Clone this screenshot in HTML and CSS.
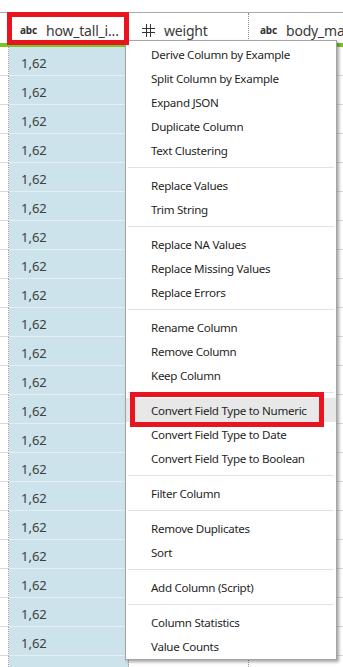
FILE: index.html
```html
<!DOCTYPE html>
<html>
<head>
<meta charset="utf-8">
<link rel="stylesheet" href="styles.css">
</head>
<body>
<div class="topbar"></div>
<div class="header">
  <div class="hcell c0"></div>
  <div class="hcell c1"><span class="type">abc</span><span class="name">how_tall_i...</span></div>
  <div class="hcell c2"><svg class="hash" width="13" height="13" viewBox="0 0 13 13"><path d="M4.5 0V13M8.5 0V13M0 4.5H13M0 8.5H13" stroke="#333" stroke-width="1" fill="none"/></svg><span class="name">weight</span></div>
  <div class="hcell c3"><span class="type">abc</span><span class="name">body_ma</span></div>
</div>
<div class="rows">
  <div class="row"><div class="cell c0"></div><div class="cell c1">1,62</div><div class="cell c2"></div><div class="cell c3"></div></div>
  <div class="row"><div class="cell c0"></div><div class="cell c1">1,62</div><div class="cell c2"></div><div class="cell c3"></div></div>
  <div class="row"><div class="cell c0"></div><div class="cell c1">1,62</div><div class="cell c2"></div><div class="cell c3"></div></div>
  <div class="row"><div class="cell c0"></div><div class="cell c1">1,62</div><div class="cell c2"></div><div class="cell c3"></div></div>
  <div class="row"><div class="cell c0"></div><div class="cell c1">1,62</div><div class="cell c2"></div><div class="cell c3"></div></div>
  <div class="row"><div class="cell c0"></div><div class="cell c1">1,62</div><div class="cell c2"></div><div class="cell c3"></div></div>
  <div class="row"><div class="cell c0"></div><div class="cell c1">1,62</div><div class="cell c2"></div><div class="cell c3"></div></div>
  <div class="row"><div class="cell c0"></div><div class="cell c1">1,62</div><div class="cell c2"></div><div class="cell c3"></div></div>
  <div class="row"><div class="cell c0"></div><div class="cell c1">1,62</div><div class="cell c2"></div><div class="cell c3"></div></div>
  <div class="row"><div class="cell c0"></div><div class="cell c1">1,62</div><div class="cell c2"></div><div class="cell c3"></div></div>
  <div class="row"><div class="cell c0"></div><div class="cell c1">1,62</div><div class="cell c2"></div><div class="cell c3"></div></div>
  <div class="row"><div class="cell c0"></div><div class="cell c1">1,62</div><div class="cell c2"></div><div class="cell c3"></div></div>
  <div class="row"><div class="cell c0"></div><div class="cell c1">1,62</div><div class="cell c2"></div><div class="cell c3"></div></div>
  <div class="row"><div class="cell c0"></div><div class="cell c1">1,62</div><div class="cell c2"></div><div class="cell c3"></div></div>
  <div class="row"><div class="cell c0"></div><div class="cell c1">1,62</div><div class="cell c2"></div><div class="cell c3"></div></div>
  <div class="row"><div class="cell c0"></div><div class="cell c1">1,62</div><div class="cell c2"></div><div class="cell c3"></div></div>
  <div class="row"><div class="cell c0"></div><div class="cell c1">1,62</div><div class="cell c2"></div><div class="cell c3"></div></div>
  <div class="row"><div class="cell c0"></div><div class="cell c1">1,62</div><div class="cell c2"></div><div class="cell c3"></div></div>
  <div class="row"><div class="cell c0"></div><div class="cell c1">1,62</div><div class="cell c2"></div><div class="cell c3"></div></div>
  <div class="row"><div class="cell c0"></div><div class="cell c1">1,62</div><div class="cell c2"></div><div class="cell c3"></div></div>
  <div class="row"><div class="cell c0"></div><div class="cell c1">1,62</div><div class="cell c2"></div><div class="cell c3"></div></div>
  <div class="row"><div class="cell c0"></div><div class="cell c1"></div><div class="cell c2"></div><div class="cell c3"></div></div>
</div>

<div class="menu">
  <div class="item">Derive Column by Example</div>
  <div class="item">Split Column by Example</div>
  <div class="item">Expand JSON</div>
  <div class="item">Duplicate Column</div>
  <div class="item">Text Clustering</div>
  <div class="sep"></div>
  <div class="item">Replace Values</div>
  <div class="item">Trim String</div>
  <div class="sep"></div>
  <div class="item">Replace NA Values</div>
  <div class="item">Replace Missing Values</div>
  <div class="item">Replace Errors</div>
  <div class="sep"></div>
  <div class="item">Rename Column</div>
  <div class="item">Remove Column</div>
  <div class="item">Keep Column</div>
  <div class="sep"></div>
  <div class="item active">Convert Field Type to Numeric</div>
  <div class="item">Convert Field Type to Date</div>
  <div class="item">Convert Field Type to Boolean</div>
  <div class="sep"></div>
  <div class="item">Filter Column</div>
  <div class="sep"></div>
  <div class="item">Remove Duplicates</div>
  <div class="item">Sort</div>
  <div class="sep"></div>
  <div class="item">Add Column (Script)</div>
  <div class="sep"></div>
  <div class="item">Column Statistics</div>
  <div class="item">Value Counts</div>
</div>

<div class="mark mark-header"></div>
<div class="mark mark-item"></div>
</body>
</html>
```

FILE: styles.css
```css
html, body {
  margin: 0;
  padding: 0;
}
body {
  width: 343px;
  height: 667px;
  overflow: hidden;
  position: relative;
  background: #ffffff;
  font-family: "Noto Sans", "Open Sans", sans-serif;
  color: #333333;
}
.topbar {
  height: 12px;
  border-bottom: 1px solid #a9a9a9;
}
.header {
  display: flex;
  height: 30px;
  border-bottom: 4px solid #7cc520;
}
.hcell {
  display: flex;
  align-items: center;
  box-sizing: border-box;
  padding-top: 4px;
  white-space: nowrap;
  overflow: hidden;
}
.c0 { width: 9px; flex: none; }
.c1 { width: 120px; flex: none; }
.c2 { width: 120px; flex: none; }
.c3 { flex: 1; min-width: 0; }
.hcell.c1 { padding-left: 11px; }
.hcell.c2 { padding-left: 13px; border-right: 1px dotted #8a8a8a; }
.hcell.c3 { padding-left: 11px; }
.type {
  font-size: 10px;
  font-weight: bold;
  color: #333333;
  width: 16px;
  margin-right: 10px;
  letter-spacing: -0.2px;
  flex: none;
}
.hash {
  margin-right: 9px;
  flex: none;
}
.name {
  font-size: 14px;
  color: #3a3a3a;
  letter-spacing: -0.2px;
}
.row {
  display: flex;
  height: 29px;
}
.cell {
  box-sizing: border-box;
  height: 29px;
  border-bottom: 1px solid #dadada;
  border-right: 1px dotted #9a9a9a;
}
.cell.c3 { border-right: none; }
.cell.c1 {
  background: #cde3eb;
  border-bottom-color: #e6eef1;
  padding-left: 12px;
  padding-top: 5px;
  line-height: 23px;
  font-size: 13px;
  color: #404040;
}
.menu {
  position: absolute;
  left: 125px;
  top: 40px;
  width: 212px;
  box-sizing: border-box;
  border: 1px solid #a3a3a3;
  background: #ffffff;
  box-shadow: 2px 2px 3px rgba(0, 0, 0, 0.35);
  padding: 1px 0;
}
.item {
  height: 24px;
  line-height: 25px;
  padding-left: 25px;
  font-size: 11.6px;
  letter-spacing: -0.3px;
  color: #1f1f1f;
  white-space: nowrap;
}
.item.active {
  background: #e8e8e8;
}
.sep {
  height: 1px;
  background: #e2e2e2;
  margin: 5px 2px;
}
.mark {
  position: absolute;
  box-sizing: border-box;
  border: 5px solid #e8141e;
}
.mark-header {
  left: 7px;
  top: 12px;
  width: 122px;
  height: 33px;
}
.mark-item {
  left: 130px;
  top: 392px;
  width: 194px;
  height: 35px;
}
```
